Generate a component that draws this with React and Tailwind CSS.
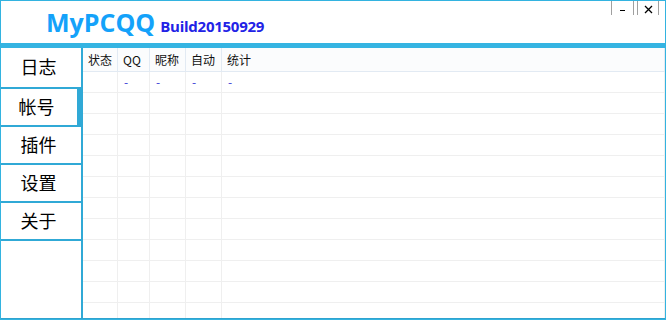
import React from "react";

const cjk = { fontFamily: '"Noto Sans CJK SC", "Noto Sans", sans-serif' };

function SideItem({ label, selected, first }) {
  return (
    <div
      className={`flex items-center justify-center bg-white border-b-2 border-[#30a9d6] ${first ? "h-[41px]" : "h-[38px]"} ${selected ? "border-r-[4px]" : ""}`}
    >
      <span className="text-[18px] leading-none text-black pr-[5px] pb-[3px]" style={cjk}>{label}</span>
    </div>
  );
}

export default function App() {
  const cols = ["状态", "QQ", "昵称", "自动", "统计"];
  const rows = Array.from({ length: 12 });
  return (
    <div className="w-[666px] h-[320px] bg-white border border-[#33b3e0] flex flex-col overflow-hidden">
      <div className="h-[42px] relative shrink-0">
        <div className="flex items-baseline pl-[45px] pt-[9px]">
          <span
            className="text-[25px] leading-none font-bold text-[#14a2fa]"
            style={{ fontFamily: '"Open Sans", sans-serif' }}
          >
            MyPCQQ
          </span>
          <span
            className="ml-[5px] text-[15px] leading-none font-bold text-[#2222e6] tracking-[-0.25px]"
            style={{ fontFamily: '"Open Sans", sans-serif' }}
          >
            Build20150929
          </span>
        </div>
        <div className="absolute top-0 right-[6px] flex gap-[3px]">
          <div className="w-[23px] h-[14px] border-x border-[#a0a0a0] flex items-center justify-center">
            <div className="w-[5px] h-px bg-black mt-[4px]"></div>
          </div>
          <div className="w-[22px] h-[14px] border-x border-[#a0a0a0] flex items-center justify-center">
            <svg width="9" height="9" viewBox="0 0 9 9" className="mt-[3px]">
              <path d="M1 1 L8 8 M8 1 L1 8" stroke="#000" strokeWidth="1.3" fill="none" />
            </svg>
          </div>
        </div>
      </div>
      <div className="h-[5px] bg-[#35b4e2] shrink-0"></div>
      <div className="flex flex-1 min-h-0 border-b border-[#2fa3cf]">
        <div className="w-[80px] flex flex-col bg-white shrink-0">
          <SideItem label="日志" first />
          <SideItem label="帐号" selected />
          <SideItem label="插件" />
          <SideItem label="设置" />
          <SideItem label="关于" />
        </div>
        <div className="w-[2px] bg-[#30a9d6] shrink-0"></div>
        <div className="flex-1 flex flex-col overflow-hidden">
          <div className="grid grid-cols-[35px_32px_36px_36px_1fr] h-[24px] bg-[#fbfcfd] border-b border-[#e2eaf3] shrink-0">
            {cols.map((c) => (
              <div
                key={c}
                className="border-r border-[#e2eaf3] flex items-center pl-[5px] text-[12px] text-[#111]"
                style={cjk}
              >
                {c}
              </div>
            ))}
          </div>
          {rows.map((_, i) => (
            <div
              key={i}
              className="grid grid-cols-[35px_32px_36px_36px_1fr] h-[21px] border-b border-[#efefef] shrink-0"
            >
              {cols.map((c, j) => (
                <div
                  key={c}
                  className="border-r border-[#efefef] flex items-center pl-[6px] text-[12px] text-[#3a3ad6]"
                  style={cjk}
                >
                  {i === 0 && j > 0 ? "-" : ""}
                </div>
              ))}
            </div>
          ))}
        </div>
      </div>
    </div>
  );
}
